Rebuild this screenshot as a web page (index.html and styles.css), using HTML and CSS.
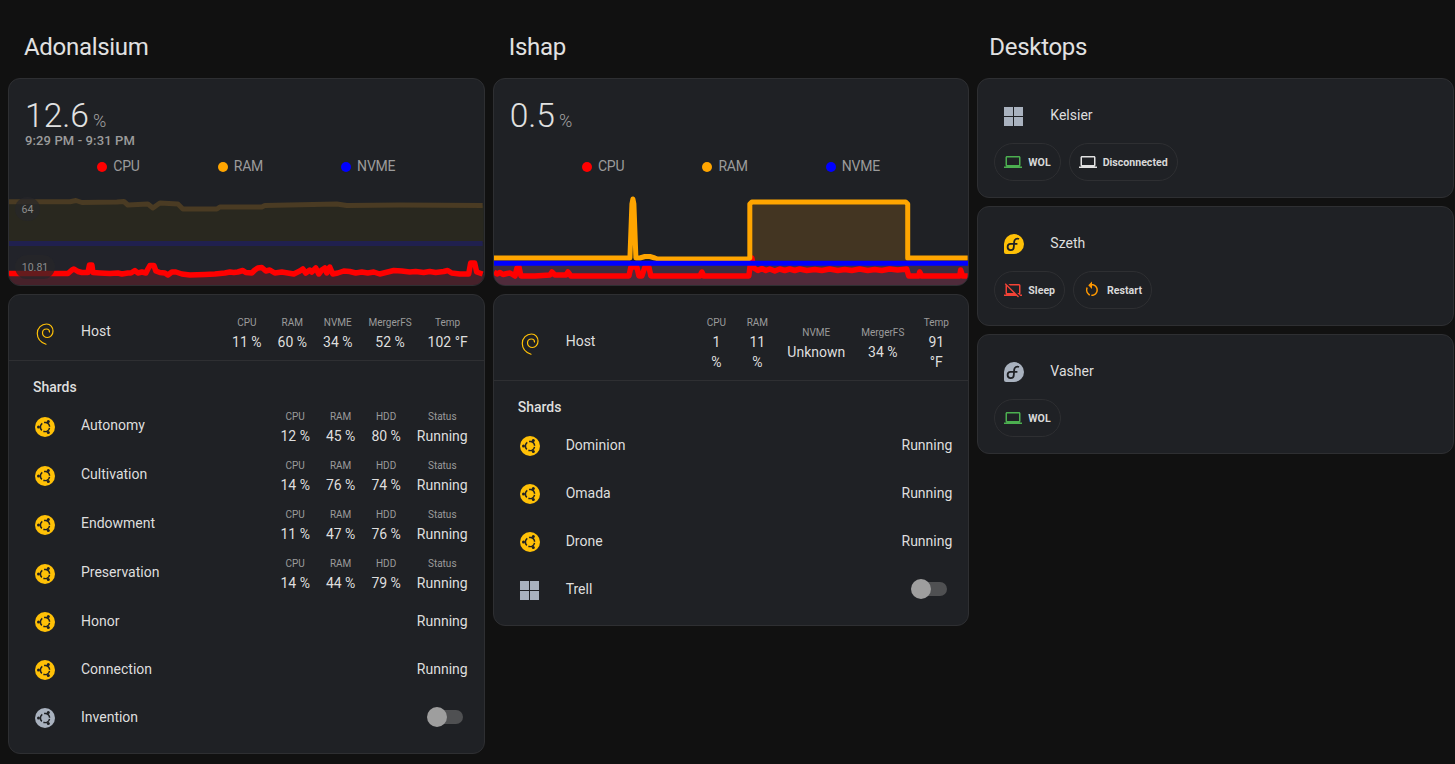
FILE: index.html
```html
<!DOCTYPE html>
<html lang="en">
<head>
<meta charset="utf-8">
<title>Servers</title>
<link rel="stylesheet" href="styles.css">
</head>
<body>
<svg class="defs" xmlns="http://www.w3.org/2000/svg">
  <symbol id="ubuntu" viewBox="0 0 24 24">
    <circle cx="12" cy="12" r="10" fill="currentColor"/>
    <circle cx="12" cy="12" r="4.6" fill="none" stroke="#1f2125" stroke-width="1.5" stroke-dasharray="7.8 1.83" transform="rotate(11 12 12)"/>
    <circle cx="5.5" cy="12" r="1.5" fill="#1f2125"/>
    <circle cx="15.3" cy="6.4" r="1.5" fill="#1f2125"/>
    <circle cx="15.3" cy="17.6" r="1.5" fill="#1f2125"/>
  </symbol>
  <symbol id="debian" viewBox="0 0 24 24">
    <path d="M13 23.2C8 21.5 4.3 17.5 4.3 12.5C4.3 7 8.5 3 13.5 3C17.5 3 20 6.2 20 10C20 13.8 17.5 16.5 14.5 16.5C11.5 16.5 9.5 14.3 9.5 12C9.5 9.6 11.3 8 13.5 8C15.3 8 16.5 9.3 16.5 11" fill="none" stroke="currentColor" stroke-width="1.2" stroke-linecap="round"/>
  </symbol>
  <symbol id="microsoft" viewBox="0 0 24 24">
    <path fill="currentColor" d="M2,3H11V12H2V3M11,22H2V13H11V22M21,3V12H12V3H21M21,22H12V13H21V22Z"/>
  </symbol>
  <symbol id="fedora" viewBox="0 0 24 24">
    <path fill="currentColor" d="M12 2A10 10 0 1 1 12 22H4A2 2 0 0 1 2 20V12A10 10 0 0 1 12 2Z"/>
    <path fill="none" stroke="#1f2125" stroke-width="1.8" d="M17 7A3.2 3.2 0 0 0 12.2 9.6L11.8 15A3.1 3.1 0 1 1 8.6 11.9H15.4"/>
  </symbol>
  <symbol id="laptop" viewBox="0 0 24 24">
    <path fill="currentColor" d="M4,6H20V16H4M20,18A2,2 0 0,0 22,16V6C22,4.89 21.1,4 20,4H4C2.89,4 2,4.89 2,6V16A2,2 0 0,0 4,18H0V20H24V18H20Z"/>
  </symbol>
  <symbol id="laptop-off" viewBox="0 0 24 24">
    <path fill="currentColor" d="M1,4.27L2.28,3L20,20.72L18.73,22L16.73,20H0V18H4C2.89,18 2,17.1 2,16V6C2,5.78 2.04,5.57 2.1,5.37L1,4.27M4,16H12.73L4,7.27V16M20,16V6H7.82L5.82,4H20A2,2 0 0,1 22,6V16A2,2 0 0,1 20,18H24V20H21.82L17.82,16H20Z"/>
  </symbol>
  <symbol id="restart" viewBox="0 0 24 24">
    <path fill="currentColor" d="M12,4C14.1,4 16.1,4.8 17.6,6.3C20.7,9.4 20.7,14.5 17.6,17.6C15.8,19.5 13.3,20.2 10.9,19.9L11.4,17.9C13.1,18.1 14.9,17.5 16.2,16.2C18.5,13.9 18.5,10.1 16.2,7.7C15.1,6.6 13.5,6 12,6V10.6L7,5.6L12,0.6V4M6.3,17.6C3.7,15 3.2,11 4.9,7.9L6.4,9.4C5.3,11.6 5.7,14.4 7.6,16.3C8.1,16.8 8.7,17.2 9.4,17.5L8.8,19.5C7.9,19.2 7,18.5 6.3,17.6Z"/>
  </symbol>
</svg>

<main class="columns">
  <section class="column">
    <h1 class="title">Adonalsium</h1>
    <div class="card graph-card">
      <div class="state"><span class="state-value">12.6</span><span class="state-unit">%</span></div>
      <div class="state-time">9:29 PM - 9:31 PM</div>
      <div class="legend">
        <span class="legend-item"><i class="dot dot-red"></i>CPU</span>
        <span class="legend-item"><i class="dot dot-orange"></i>RAM</span>
        <span class="legend-item"><i class="dot dot-blue"></i>NVME</span>
      </div>
      <div class="chart">
        <svg class="chart-svg" viewBox="9 186 475 99" preserveAspectRatio="none" xmlns="http://www.w3.org/2000/svg">
          <path fill="#29281f" d="M9 201.7H76L82 202.5L117 202L124 202.5L128 205L148 204L153 208L160 203L178 204L183 209L217 209L220 207H262L265 205.5L337 204L347 205.5L400 205L484 205.5V242H9Z"/>
          <path fill="#22232a" d="M9 243H484V285H9Z"/>
          <path fill="#46212a" d="M9 273.5H68L74 269L82 272.5H88L89.5 265H92L93 272.5L130 273L135 270.5L138 273L146 273L150 265.5H154L156 271L168 275L176 272L190 275L225 273L243 270.5L252 273L258 268L262 267.5L270 270L300 271L316 268L330 267L338 273L350 271.5L394 270.5L424 272.5L448 270.5L469 274L471 263H475L477 272L484 274V285H9Z"/>
          <path class="line" stroke="#4a3b23" d="M9 201.7H70L76 200.5L82 202.5L117 202L124 201.5L128 205L148 204L153 208L160 203L178 204L183 209L217 209L220 207H262L265 205.5L337 204L347 205.5L400 205L483 205.5"/>
          <path class="line" stroke="#20204f" d="M9 243.5H483"/>
          <path class="line line-red" d="M9 273.5H68L72 270L74 269L78 271.5L82 272.5H88L89.5 265H92L93 272.5L100 273L110 273.5L118 273L122 274L128 273H131L135 270.5L138 273L142 272L146 273L148 269L150 265.5H154L156 271L160 272.5L165 273L168 275L172 272H176L182 274L190 275L205 274.5L215 274L225 273L230 272L234 272.5L238 272L243 270.5L246 272.5L252 273L255 270L258 268L262 267.5L266 271L270 270L275 273L282 272L288 273L294 274L300 271L303 269L306 273L310 270L312 272L316 268L319 274L322 270L325 268L327 273L330 267L333 274L338 273L344 271L350 271.5L356 273L362 272L368 273L374 272L380 274L388 272L394 270.5L402 271L410 272L416 271.5L424 272.5L430 271.5L436 272.5L444 271.5L448 270.5L452 273L460 274L469 274L471 263H475L477 272L483 274"/>
        </svg>
        <span class="pill pill-ram">64</span>
        <span class="pill pill-cpu">10.81</span>
      </div>
    </div>
    <div class="card list-card">
      <div class="row">
        <span class="row-icon"><svg class="icon on"><use href="#debian"/></svg></span>
        <span class="name">Host</span>
        <div class="stats">
          <div class="stat"><span class="stat-label">CPU</span><span class="stat-value">11 %</span></div>
          <div class="stat"><span class="stat-label">RAM</span><span class="stat-value">60 %</span></div>
          <div class="stat"><span class="stat-label">NVME</span><span class="stat-value">34 %</span></div>
          <div class="stat"><span class="stat-label">MergerFS</span><span class="stat-value">52 %</span></div>
          <div class="stat"><span class="stat-label">Temp</span><span class="stat-value">102 °F</span></div>
        </div>
      </div>
      <div class="divider"></div>
      <div class="section-header">Shards</div>
      <div class="row">
        <span class="row-icon"><svg class="icon on"><use href="#ubuntu"/></svg></span>
        <span class="name">Autonomy</span>
        <div class="stats">
          <div class="stat"><span class="stat-label">CPU</span><span class="stat-value">12 %</span></div>
          <div class="stat"><span class="stat-label">RAM</span><span class="stat-value">45 %</span></div>
          <div class="stat"><span class="stat-label">HDD</span><span class="stat-value">80 %</span></div>
          <div class="stat"><span class="stat-label">Status</span><span class="stat-value">Running</span></div>
        </div>
      </div>
      <div class="row">
        <span class="row-icon"><svg class="icon on"><use href="#ubuntu"/></svg></span>
        <span class="name">Cultivation</span>
        <div class="stats">
          <div class="stat"><span class="stat-label">CPU</span><span class="stat-value">14 %</span></div>
          <div class="stat"><span class="stat-label">RAM</span><span class="stat-value">76 %</span></div>
          <div class="stat"><span class="stat-label">HDD</span><span class="stat-value">74 %</span></div>
          <div class="stat"><span class="stat-label">Status</span><span class="stat-value">Running</span></div>
        </div>
      </div>
      <div class="row">
        <span class="row-icon"><svg class="icon on"><use href="#ubuntu"/></svg></span>
        <span class="name">Endowment</span>
        <div class="stats">
          <div class="stat"><span class="stat-label">CPU</span><span class="stat-value">11 %</span></div>
          <div class="stat"><span class="stat-label">RAM</span><span class="stat-value">47 %</span></div>
          <div class="stat"><span class="stat-label">HDD</span><span class="stat-value">76 %</span></div>
          <div class="stat"><span class="stat-label">Status</span><span class="stat-value">Running</span></div>
        </div>
      </div>
      <div class="row">
        <span class="row-icon"><svg class="icon on"><use href="#ubuntu"/></svg></span>
        <span class="name">Preservation</span>
        <div class="stats">
          <div class="stat"><span class="stat-label">CPU</span><span class="stat-value">14 %</span></div>
          <div class="stat"><span class="stat-label">RAM</span><span class="stat-value">44 %</span></div>
          <div class="stat"><span class="stat-label">HDD</span><span class="stat-value">79 %</span></div>
          <div class="stat"><span class="stat-label">Status</span><span class="stat-value">Running</span></div>
        </div>
      </div>
      <div class="row">
        <span class="row-icon"><svg class="icon on"><use href="#ubuntu"/></svg></span>
        <span class="name">Honor</span>
        <span class="status">Running</span>
      </div>
      <div class="row">
        <span class="row-icon"><svg class="icon on"><use href="#ubuntu"/></svg></span>
        <span class="name">Connection</span>
        <span class="status">Running</span>
      </div>
      <div class="row">
        <span class="row-icon"><svg class="icon off"><use href="#ubuntu"/></svg></span>
        <span class="name">Invention</span>
        <span class="toggle"><i class="toggle-track"></i><i class="toggle-thumb"></i></span>
      </div>
    </div>
  </section>

  <section class="column">
    <h1 class="title">Ishap</h1>
    <div class="card graph-card">
      <div class="state"><span class="state-value">0.5</span><span class="state-unit">%</span></div>
      <div class="state-time"></div>
      <div class="legend">
        <span class="legend-item"><i class="dot dot-red"></i>CPU</span>
        <span class="legend-item"><i class="dot dot-orange"></i>RAM</span>
        <span class="legend-item"><i class="dot dot-blue"></i>NVME</span>
      </div>
      <div class="chart">
        <svg class="chart-svg" viewBox="494 186 475 99" preserveAspectRatio="none" xmlns="http://www.w3.org/2000/svg">
          <path fill="#433522" d="M750 202H908V263H750Z"/>
          <path fill="#3d2d3f" d="M494 263H969V285H494Z"/>
          <path fill="#4f2b3b" d="M494 272L500 274L510 273L515 276L518 267L521 276H550L552 272L555 275H566L568 272L571 276H629L631 267H637L639 276H642L645 267H649L651 276H700L702 272L704 276H749L751 268H755L760 270L780 269L800 270L830 269L860 270L880 269L907 269L909 276H919L920 273L922 276H960L961 270L963 276H969V285H494Z"/>
          <path class="line line-red" d="M494 272L497 274L500 272.5L503 274.5L507 273.5L510 273L515 276L517 268L519 267L521 276H535L550 275L552 272L555 275H566L568 272L571 276H629L631 267H637L639 276H642L645 267H649L651 276H700L702 272L704 276H749L751 260L752 258L754 268L758 270.5L762 268.5L766 270.5L770 269L775 271L780 269L785 270.5L790 269L795 270.5L800 269L807 270.5L815 269.5L822 270.5L830 269L838 270.5L845 269.5L852 270.5L860 269L868 270.5L875 269.5L882 270.5L890 269L898 270L907 269L909 276H919L920 272L922 276H960L961 270L963 276H968"/>
          <path class="line" stroke="#ffa500" d="M494 258H630L632 204L633 199L634 204L636 258H640L645 256.5H650L655 258L658 259H748L750 258V204L752 202H906L908 204V258L912 258H968"/>
          <path class="line" stroke="#0000ff" d="M494 263.3H969"/>
        </svg>
      </div>
    </div>
    <div class="card list-card">
      <div class="row">
        <span class="row-icon"><svg class="icon on"><use href="#debian"/></svg></span>
        <span class="name">Host</span>
        <div class="stats">
          <div class="stat stat-cpu"><span class="stat-label">CPU</span><span class="stat-value">1<br>%</span></div>
          <div class="stat stat-ram"><span class="stat-label">RAM</span><span class="stat-value">11<br>%</span></div>
          <div class="stat"><span class="stat-label">NVME</span><span class="stat-value">Unknown</span></div>
          <div class="stat"><span class="stat-label">MergerFS</span><span class="stat-value">34 %</span></div>
          <div class="stat stat-temp"><span class="stat-label">Temp</span><span class="stat-value">91<br>°F</span></div>
        </div>
      </div>
      <div class="divider"></div>
      <div class="section-header">Shards</div>
      <div class="row">
        <span class="row-icon"><svg class="icon on"><use href="#ubuntu"/></svg></span>
        <span class="name">Dominion</span>
        <span class="status">Running</span>
      </div>
      <div class="row">
        <span class="row-icon"><svg class="icon on"><use href="#ubuntu"/></svg></span>
        <span class="name">Omada</span>
        <span class="status">Running</span>
      </div>
      <div class="row">
        <span class="row-icon"><svg class="icon on"><use href="#ubuntu"/></svg></span>
        <span class="name">Drone</span>
        <span class="status">Running</span>
      </div>
      <div class="row">
        <span class="row-icon"><svg class="icon off"><use href="#microsoft"/></svg></span>
        <span class="name">Trell</span>
        <span class="toggle"><i class="toggle-track"></i><i class="toggle-thumb"></i></span>
      </div>
    </div>
  </section>

  <section class="column">
    <h1 class="title title-tight">Desktops</h1>
    <div class="card list-card">
      <div class="row">
        <span class="row-icon"><svg class="icon off"><use href="#microsoft"/></svg></span>
        <span class="name">Kelsier</span>
      </div>
      <div class="chips">
        <span class="chip"><svg class="chip-icon green"><use href="#laptop"/></svg>WOL</span>
        <span class="chip"><svg class="chip-icon white"><use href="#laptop"/></svg>Disconnected</span>
      </div>
    </div>
    <div class="card list-card">
      <div class="row">
        <span class="row-icon"><svg class="icon on"><use href="#fedora"/></svg></span>
        <span class="name">Szeth</span>
      </div>
      <div class="chips">
        <span class="chip"><svg class="chip-icon red"><use href="#laptop-off"/></svg>Sleep</span>
        <span class="chip"><svg class="chip-icon orange"><use href="#restart"/></svg>Restart</span>
      </div>
    </div>
    <div class="card list-card">
      <div class="row">
        <span class="row-icon"><svg class="icon off"><use href="#fedora"/></svg></span>
        <span class="name">Vasher</span>
      </div>
      <div class="chips">
        <span class="chip"><svg class="chip-icon green"><use href="#laptop"/></svg>WOL</span>
      </div>
    </div>
  </section>
</main>
</body>
</html>
```

FILE: styles.css
```css
* { box-sizing: border-box; }

html, body {
  margin: 0;
  height: 100%;
  overflow: hidden;
  background: #111111;
  color: #dedede;
  font-family: Roboto, "Liberation Sans", sans-serif;
  font-size: 14px;
}

.defs { display: none; }

.columns {
  display: grid;
  grid-template-columns: repeat(3, 1fr);
  gap: 8px;
  padding: 27px 1px 0 8px;
}

.column {
  display: flex;
  flex-direction: column;
  gap: 8px;
  min-width: 0;
}

.title {
  margin: 0 0 3px;
  padding-left: 16px;
  font-size: 24px;
  font-weight: 400;
  line-height: 40px;
  letter-spacing: -0.3px;
  color: #e1e1e1;
}

.title-tight { padding-left: 12px; }

.card {
  background: #1f2125;
  border: 1px solid #2e2f32;
  border-radius: 12px;
  overflow: hidden;
}

.graph-card { height: 208px; }

.state {
  display: flex;
  align-items: baseline;
  height: 40px;
  margin: 17px 16px 0;
}

.state-value {
  font-size: 33.6px;
  font-weight: 300;
  line-height: 40px;
  color: #e1e1e1;
}

.state-unit {
  margin-left: 4px;
  font-size: 18px;
  font-weight: 300;
  color: #a0a0a0;
}

.state-time {
  height: 16px;
  margin: -3px 16px 0;
  font-size: 13px;
  font-weight: 500;
  line-height: 16px;
  letter-spacing: 0.12px;
  color: #9b9b9b;
}

.legend {
  display: flex;
  justify-content: center;
  gap: 78px;
  height: 20px;
  margin-top: 7px;
}

.legend-item {
  display: flex;
  align-items: center;
  gap: 6px;
  font-size: 14px;
  letter-spacing: -0.2px;
  color: #9b9b9b;
}

.dot {
  width: 10px;
  height: 10px;
  margin-top: 1px;
  border-radius: 50%;
}
.dot-red { background: #ff0000; }
.dot-orange { background: #ffa500; }
.dot-blue { background: #0000ff; }

.chart {
  position: relative;
  height: 99px;
  margin-top: 10px;
}

.chart-svg {
  display: block;
  width: 100%;
  height: 100%;
}

.line {
  fill: none;
  stroke-width: 5;
  stroke-linejoin: round;
}

.line-red {
  stroke: #ff0000;
  stroke-width: 5.5;
}

.pill {
  position: absolute;
  left: 6px;
  display: flex;
  align-items: center;
  justify-content: center;
  height: 24px;
  border-radius: 12px;
  background: rgba(38, 39, 41, 0.7);
  font-size: 10.5px;
  color: #8c8c8c;
}
.pill-ram { top: 11px; width: 25px; }
.pill-cpu { top: 69px; width: 40px; }

.list-card {
  display: flex;
  flex-direction: column;
  gap: 8px;
  padding: 16px;
}

.row {
  display: flex;
  align-items: center;
  min-height: 40px;
}

.row-icon {
  display: flex;
  flex: none;
  align-items: center;
  justify-content: center;
  width: 40px;
  height: 40px;
  padding-top: 2px;
}

.icon {
  width: 24px;
  height: 24px;
}
.on { color: #ffc107; }
.off { color: #a9b2bf; }

.name {
  flex: 1;
  margin-left: 16px;
  line-height: 20px;
}

.row:has(.stats) .name { margin-bottom: 1px; }

.stats {
  display: flex;
  align-items: center;
  gap: 16px;
}

.stat {
  display: flex;
  flex-direction: column;
  align-items: center;
  text-align: center;
}
.stat-cpu { width: 22px; }
.stat-ram { width: 28px; }
.stat-temp { width: 32px; }

.stat-label {
  padding-top: 2px;
  font-size: 10px;
  line-height: 19px;
  color: #9b9b9b;
}

.stat-value {
  font-size: 14px;
  line-height: 20px;
  white-space: nowrap;
}

.status {
  font-size: 14px;
  line-height: 20px;
}

.divider {
  height: 1px;
  margin: 0 -16px 8px;
  background: #2e2f32;
}

.section-header {
  margin-left: 8px;
  font-size: 14px;
  font-weight: 500;
  line-height: 20px;
}

.toggle {
  position: relative;
  flex: none;
  width: 36px;
  height: 20px;
  margin-right: 5px;
}

.toggle-track {
  position: absolute;
  top: 3px;
  right: 0;
  width: 30px;
  height: 14px;
  border-radius: 7px;
  background: #4f5052;
}

.toggle-thumb {
  position: absolute;
  top: 0;
  left: 0;
  width: 20px;
  height: 20px;
  border-radius: 50%;
  background: #9e9e9e;
}

.chips {
  display: flex;
  gap: 8px;
}

.chip {
  display: flex;
  align-items: center;
  gap: 6px;
  height: 38px;
  padding: 0 9px;
  border: 1px solid #2e2f32;
  border-radius: 19px;
  font-size: 10.6px;
  font-weight: 700;
  color: #d8d8d8;
}

.chip-icon {
  flex: none;
  width: 18px;
  height: 18px;
}
.green { color: #4caf50; }
.white { color: #e1e1e1; }
.red { color: #f44336; }
.orange { color: #ff9800; }
```
